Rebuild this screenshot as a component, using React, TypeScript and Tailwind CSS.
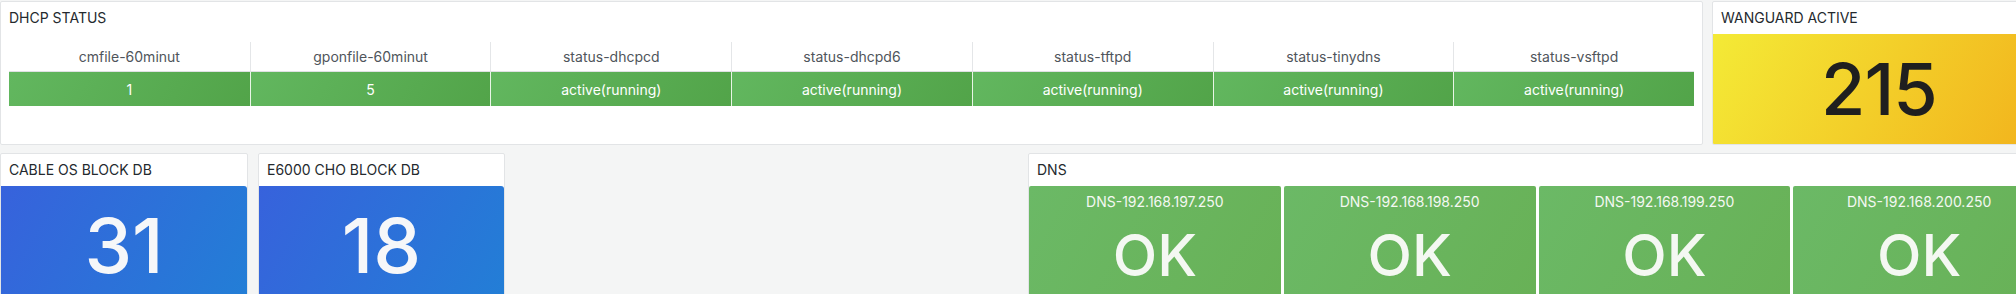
import React from "react";

const font = { fontFamily: "Inter, 'Noto Sans', 'Liberation Sans', sans-serif" };

const headers = [
  "cmfile-60minut",
  "gponfile-60minut",
  "status-dhcpcd",
  "status-dhcpd6",
  "status-tftpd",
  "status-tinydns",
  "status-vsftpd",
];
const values = ["1", "5", "active(running)", "active(running)", "active(running)", "active(running)", "active(running)"];

const dns = ["DNS-192.168.197.250", "DNS-192.168.198.250", "DNS-192.168.199.250", "DNS-192.168.200.250"];

function Title({ children }: { children: React.ReactNode }) {
  return (
    <div className="h-[32px] shrink-0 flex items-center px-[8px] text-[14px] font-normal text-[#24292e] leading-none">
      {children}
    </div>
  );
}

export default function App() {
  return (
    <div className="w-[2016px] h-[294px] overflow-hidden bg-[#f4f5f5]" style={font}>
      <div className="w-[2046px] pt-[1px] flex flex-col gap-[8px]">
        <div className="flex gap-[9px] h-[144px]">
          <div className="w-[1703px] bg-white border border-[#e2e4e6] rounded-[2px] flex flex-col">
            <Title>DHCP STATUS</Title>
            <div className="px-[8px] pt-[5px]">
              <div className="grid grid-cols-7 h-[33px] border-b border-[#dfe1e3]">
                {headers.map((h, i) => (
                  <div
                    key={h}
                    className={`flex items-center justify-center text-[14px] text-[#4f555b] mt-[3px] ${i > 0 ? "border-l border-[#e4e6e8]" : ""}`}
                  >
                    {h}
                  </div>
                ))}
              </div>
              <div className="grid grid-cols-7 h-[34px]">
                {values.map((v, i) => (
                  <div
                    key={i}
                    className={`flex items-center justify-center text-[14px] text-white bg-[linear-gradient(120deg,#62b75f,#52a449)] ${i > 0 ? "border-l border-[#e8f5e6]" : ""}`}
                  >
                    {v}
                  </div>
                ))}
              </div>
            </div>
          </div>
          <div className="w-[334px] bg-white border border-[#e2e4e6] rounded-[2px] flex flex-col overflow-hidden">
            <Title>WANGUARD ACTIVE</Title>
            <div className="flex-1 flex items-center justify-center bg-[linear-gradient(120deg,#f4ea36,#f2b21c)]">
              <span className="text-[72px] leading-none text-[#1f1f1f] font-medium tracking-[-1px]">215</span>
            </div>
          </div>
        </div>
        <div className="grid grid-cols-[248px_247px_1fr_1018px] gap-x-[10px] h-[160px]">
          <div className="bg-white border border-[#e2e4e6] rounded-[2px] flex flex-col overflow-hidden">
            <Title>CABLE OS BLOCK DB</Title>
            <div className="flex-1 flex items-start justify-center pt-[21px] bg-[linear-gradient(120deg,#3762dc,#227fd6)] rounded-tr-[3px]">
              <span className="text-[76px] leading-none text-[#f6f7f9] font-medium">31</span>
            </div>
          </div>
          <div className="bg-white border border-[#e2e4e6] rounded-[2px] flex flex-col overflow-hidden">
            <Title>E6000 CHO BLOCK DB</Title>
            <div className="flex-1 flex items-start justify-center pt-[21px] bg-[linear-gradient(120deg,#3762dc,#227fd6)] rounded-tr-[3px]">
              <span className="text-[76px] leading-none text-[#f6f7f9] font-medium">18</span>
            </div>
          </div>
          <div />
          <div className="bg-white border border-[#e2e4e6] rounded-[2px] flex flex-col overflow-hidden">
            <Title>DNS</Title>
            <div className="flex-1 grid grid-cols-4 gap-[3px]">
              {dns.map((d) => (
                <div
                  key={d}
                  className="flex flex-col items-center pt-[9px] rounded-[2px] bg-[linear-gradient(120deg,#6bb966,#68b156)]"
                >
                  <span className="text-[14px] text-[#f4f8f2] leading-none">{d}</span>
                  <span className="text-[58px] text-[#f4f8f2] leading-none mt-[17px] font-medium">OK</span>
                </div>
              ))}
            </div>
          </div>
        </div>
      </div>
    </div>
  );
}
